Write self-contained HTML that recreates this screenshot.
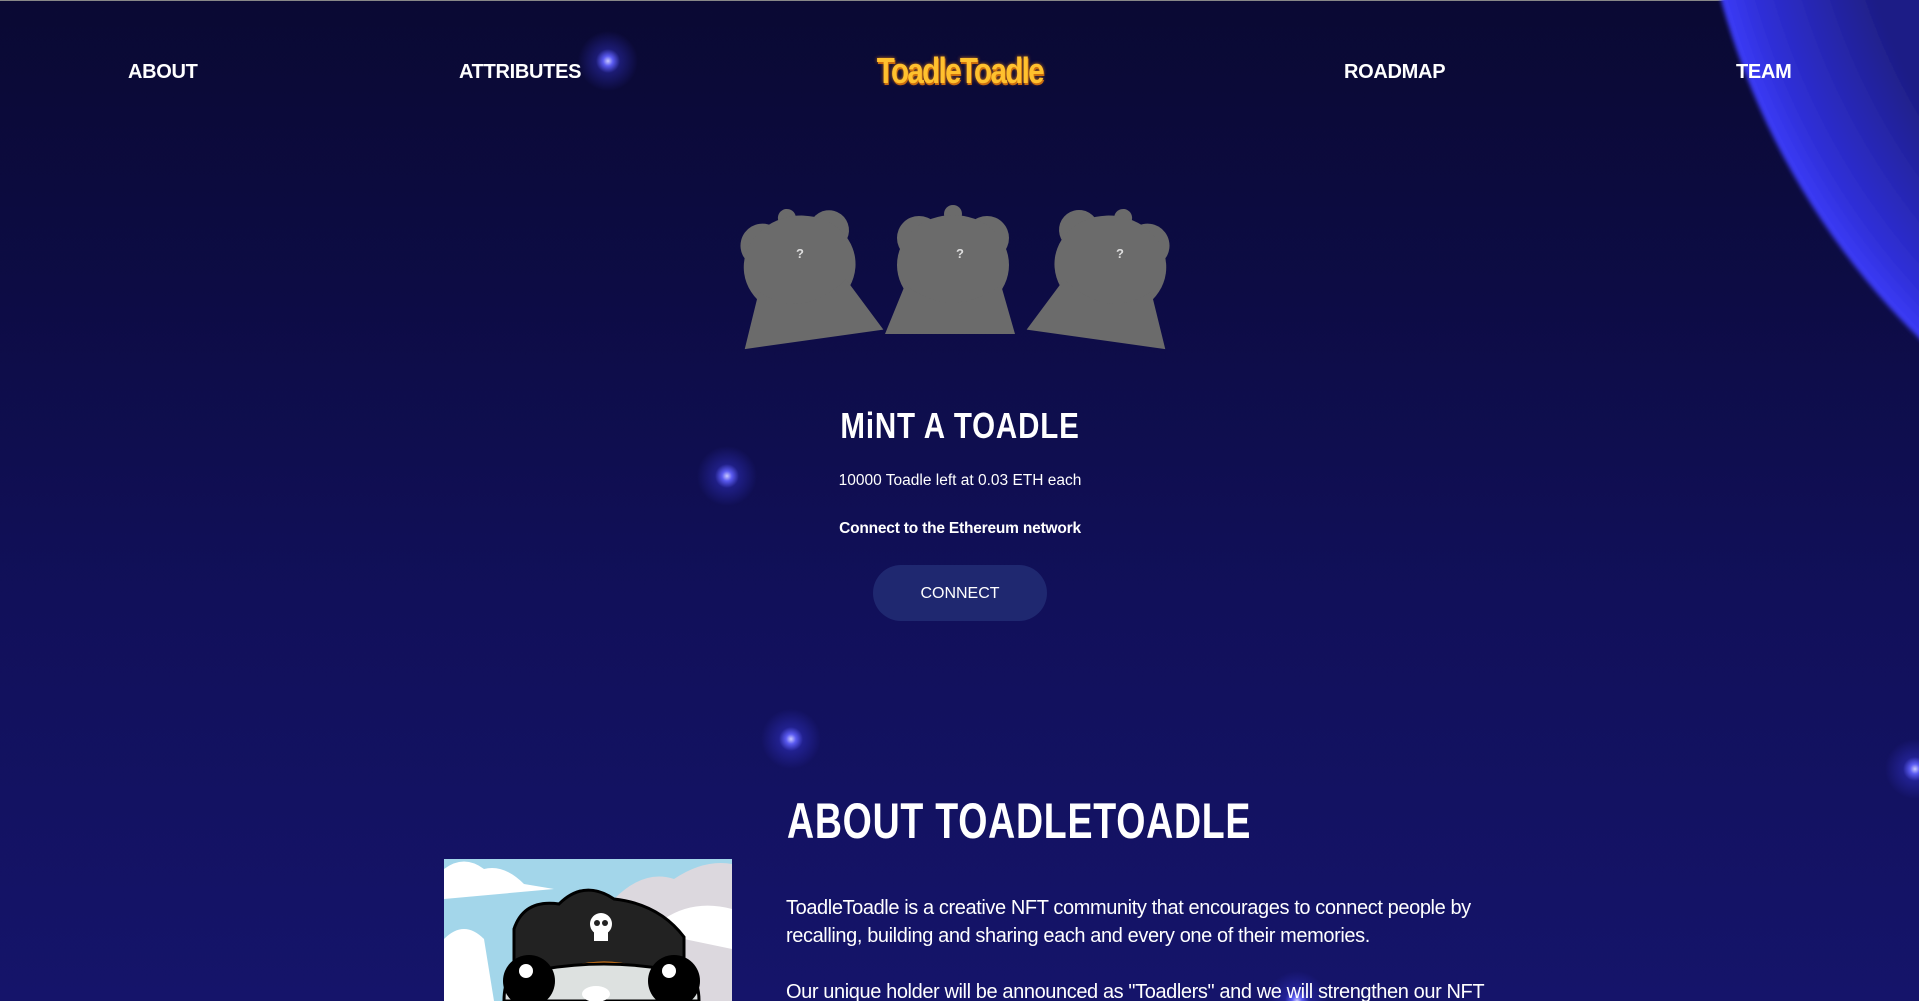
<!DOCTYPE html>
<html><head><meta charset="utf-8"><style>
html,body{margin:0;padding:0;width:1919px;height:1001px;overflow:hidden}
body{background:linear-gradient(180deg,#0a0933 0%,#0d0c45 30%,#11105a 60%,#15146a 100%);font-family:"Liberation Sans",sans-serif;color:#fff;position:relative}
.abs{position:absolute}
.nav{top:59px;font-size:20px;font-weight:bold;letter-spacing:-0.3px}
.star{position:absolute;width:60px;height:60px;border-radius:50%;background:radial-gradient(circle,#c8c8ff 0,#5a5af0 5px,rgba(60,60,230,.35) 12px,rgba(40,40,200,0) 30px)}
.title{font-family:"Liberation Sans",sans-serif;font-weight:900;letter-spacing:1px;white-space:nowrap}
</style></head><body>
<div class="abs" style="top:0;left:0;width:1919px;height:1px;background:#888"></div>
<svg class="abs" style="left:0;top:0" width="1919" height="1001">
<defs>
<radialGradient id="pl" cx="2450" cy="-200" r="760" gradientUnits="userSpaceOnUse">
<stop offset="0.8" stop-color="#1e1e86"/><stop offset="0.95" stop-color="#2f2fd8"/><stop offset="0.995" stop-color="#3c3cf8"/><stop offset="1" stop-color="#3c3cf8"/>
</radialGradient>
<filter id="b"><feGaussianBlur stdDeviation="2"/></filter>
</defs>
<circle cx="2450" cy="-200" r="756" fill="url(#pl)" filter="url(#b)"/>
</svg>
<div class="star" style="left:578px;top:31px"></div>
<div class="star" style="left:697px;top:446px"></div>
<div class="star" style="left:761px;top:709px"></div>
<div class="star" style="left:1267px;top:971px"></div>
<div class="star" style="left:1885px;top:739px"></div>

<div class="abs nav" style="left:128px;top:61px">ABOUT</div>
<div class="abs nav" style="left:459px;top:61px">ATTRIBUTES</div>
<div class="abs nav" style="left:1344px;top:61px">ROADMAP</div>
<div class="abs nav" style="left:1736px;top:61px">TEAM</div>
<div class="abs" style="left:861px;top:50px;width:175px;text-align:center;font-size:36px;font-weight:bold;color:#ffc12e;letter-spacing:-2px;text-shadow:0 0 4px #d67a10,1px 2px 0 #c86a10;transform:scaleX(0.82)">ToadleToadle</div>

<svg class="abs" style="left:735px;top:200px" width="450" height="150">
<g fill="#6b6b6b">
 <g transform="translate(70,75) rotate(-8) translate(-70,-75)">
  <circle cx="32" cy="40" r="22"/><circle cx="100" cy="34" r="20"/><circle cx="60" cy="16" r="9"/><ellipse cx="66" cy="65" rx="56" ry="50"/>
  <path d="M22 85 Q60 120 110 85 L140 140 L0 140 Z"/>
 </g>
 <g transform="translate(150,0)">
  <circle cx="34" cy="38" r="22"/><circle cx="102" cy="38" r="22"/><circle cx="68" cy="14" r="9"/><ellipse cx="68" cy="65" rx="56" ry="50"/>
  <path d="M20 85 Q68 120 116 85 L130 134 L0 134 Z"/>
 </g>
 <g transform="translate(300,0) translate(70,75) rotate(8) translate(-70,-75)">
  <circle cx="38" cy="34" r="20"/><circle cx="108" cy="40" r="22"/><circle cx="80" cy="16" r="9"/><ellipse cx="74" cy="65" rx="56" ry="50"/>
  <path d="M30 85 Q80 120 118 85 L140 140 L0 140 Z"/>
 </g>
</g>
<g fill="#ddd" font-size="13" font-weight="bold" font-family="Liberation Sans" text-anchor="middle">
<text x="65" y="58">?</text><text x="225" y="58">?</text><text x="385" y="58">?</text></g>
</svg>

<div class="abs title" style="left:760px;width:400px;top:405px;font-size:36px;text-align:center;transform:scaleX(0.82)">MiNT A TOADLE</div>
<div class="abs" style="left:760px;width:400px;top:472px;font-size:15.5px;text-align:center">10000 Toadle left at 0.03 ETH each</div>
<div class="abs" style="left:760px;width:400px;top:520px;font-size:15.5px;font-weight:bold;text-align:center;letter-spacing:-0.2px">Connect to the Ethereum network</div>
<div class="abs" style="left:873px;top:565px;width:174px;height:56px;border-radius:28px;background:#1f2870;font-size:16px;text-align:center;line-height:58px">CONNECT</div>

<div class="abs title" style="left:787px;top:792px;font-size:50px;transform:scaleX(0.75);transform-origin:0 0">ABOUT TOADLETOADLE</div>

<svg class="abs" style="left:444px;top:859px" width="288" height="142" viewBox="0 0 288 142">
<rect width="288" height="142" fill="#a3d6ea"/>
<path d="M0 10 Q20 -5 40 10 Q60 5 80 25 L110 30 L0 40 Z" fill="#fff"/>
<path d="M170 40 Q200 10 230 20 Q260 0 288 5 L288 142 L200 142 Z" fill="#dcd8de"/>
<path d="M220 60 Q250 40 288 50 L288 90 L240 80 Z" fill="#fff"/>
<path d="M0 80 Q20 60 40 80 L50 142 L0 142 Z" fill="#fff"/>
<path d="M70 70 Q80 40 115 45 Q140 20 170 40 Q215 45 240 78 L240 110 L70 110 Z" fill="#222" stroke="#000" stroke-width="3"/>
<circle cx="157" cy="65" r="11" fill="#fff"/><rect x="150" y="72" width="14" height="10" fill="#fff"/>
<circle cx="153" cy="64" r="3" fill="#222"/><circle cx="161" cy="64" r="3" fill="#222"/>
<path d="M105 115 Q160 90 215 115 L215 142 L105 142 Z" fill="#f28b1f"/>
<path d="M60 142 Q60 100 100 110 Q160 100 220 110 Q255 105 255 142 Z" fill="#dde1e0" stroke="#000" stroke-width="3"/>
<circle cx="85" cy="122" r="26" fill="#000"/><circle cx="230" cy="122" r="26" fill="#000"/>
<circle cx="82" cy="112" r="7" fill="#fff"/><circle cx="225" cy="112" r="7" fill="#fff"/>
<ellipse cx="152" cy="135" rx="14" ry="8" fill="#fff"/>
</svg>

<div class="abs" style="left:786px;top:894px;width:740px;font-size:20px;line-height:28px;letter-spacing:-0.4px">ToadleToadle is a creative NFT community that encourages to connect people by recalling, building and sharing each and every one of their memories.<br><br>Our unique holder will be announced as "Toadlers" and we will strengthen our NFT</div>
</body></html>
